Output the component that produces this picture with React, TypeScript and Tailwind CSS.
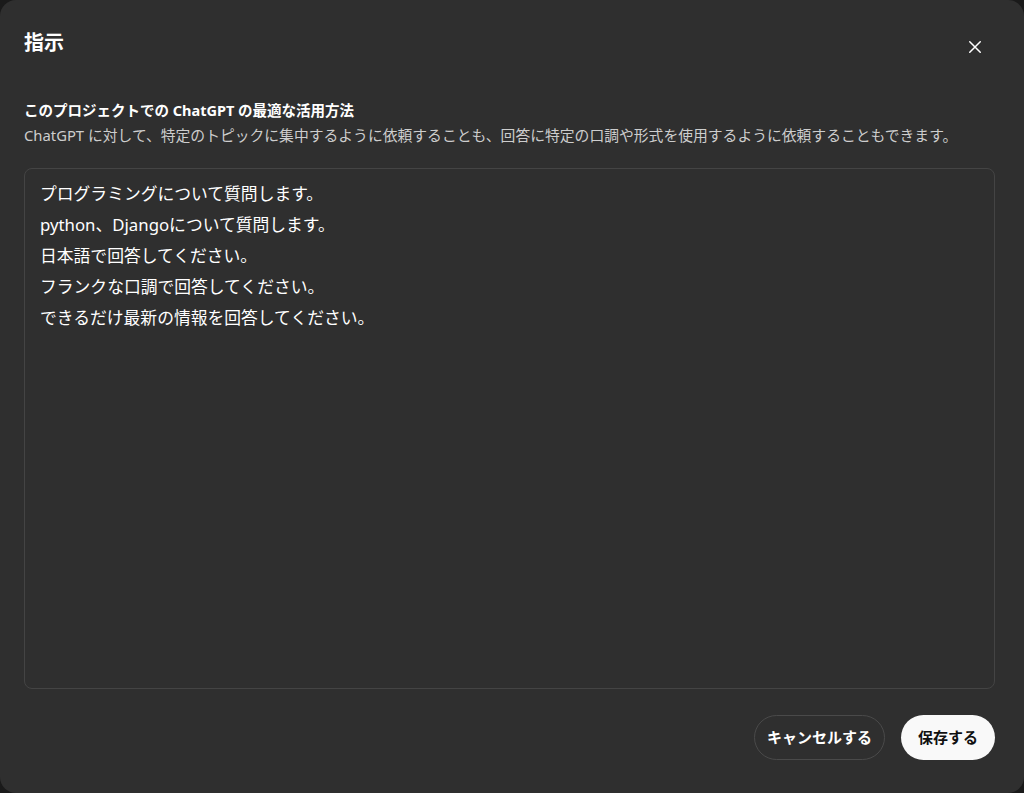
import React from "react";

const font = { fontFamily: '"Noto Sans", "Noto Sans CJK JP", sans-serif' };

export default function App() {
  const lines = [
    "プログラミングについて質問します。",
    "python、Djangoについて質問します。",
    "日本語で回答してください。",
    "フランクな口調で回答してください。",
    "できるだけ最新の情報を回答してください。",
  ];
  return (
    <div className="w-[1024px] h-[793px] bg-[#1a1a1a]" style={font}>
      <div className="w-full h-full bg-[#2f2f2f] rounded-[16px] flex flex-col text-[#ececec]">
        <div className="flex justify-between pl-6 pr-[40px] pt-[28px] h-[78px] items-start">
          <h1 className="text-[20px] font-bold leading-[30px] text-white">指示</h1>
          <svg width="18" height="18" viewBox="0 0 24 24" fill="none" stroke="white" strokeWidth="2" strokeLinecap="round" className="mt-[10px]">
            <path d="M5 5l14 14M19 5L5 19" />
          </svg>
        </div>
        <div className="px-6 pt-[20px]">
          <div className="text-[14.5px] font-bold leading-[25px] text-white">このプロジェクトでの ChatGPT の最適な活用方法</div>
          <div className="text-[14.8px] leading-[25px] text-[#cdcdcd]">ChatGPT に対して、特定のトピックに集中するように依頼することも、回答に特定の口調や形式を使用するように依頼することもできます。</div>
        </div>
        <div className="ml-6 mr-[29px] mt-[20px] h-[521px] border border-[#444] rounded-[8px] px-[15px] py-[9px] text-[16.8px] leading-[31px] text-white">
          {lines.map((l) => (
            <div key={l}>{l}</div>
          ))}
        </div>
        <div className="flex justify-end gap-4 px-[29px] mt-[26px]">
          <button className="h-[45px] px-[12px] rounded-full border border-[#4a4a4a] text-[15px] font-bold text-white">キャンセルする</button>
          <button className="h-[45px] px-[17px] rounded-full bg-[#f9f9f9] text-[15px] font-bold text-[#111]">保存する</button>
        </div>
      </div>
    </div>
  );
}
